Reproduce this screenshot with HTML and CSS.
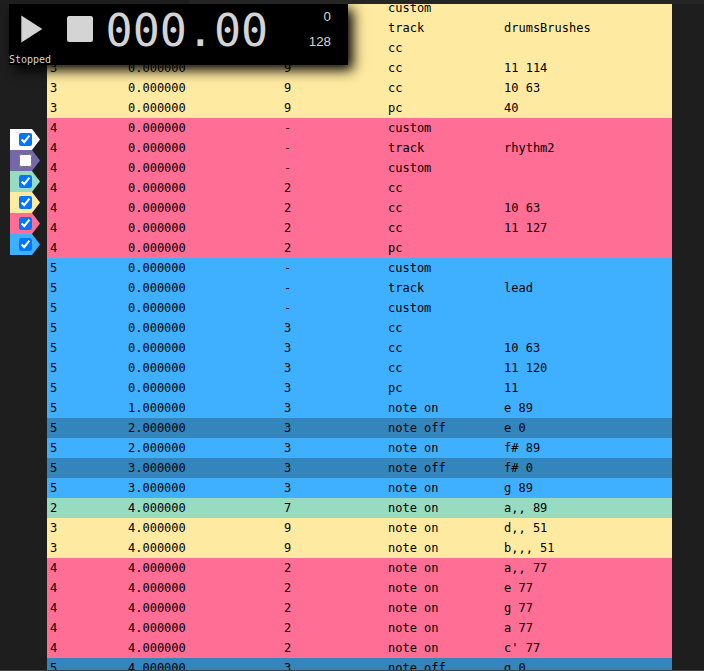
FILE: index.html
```
<!DOCTYPE html>
<html lang="en">
<head>
<meta charset="utf-8">
<title>MIDI Player</title>
<link rel="stylesheet" href="styles.css">
</head>
<body>
<div class="topbar"><div class="tab"></div></div>
<main class="view">
  <aside class="filters">
    <label class="filter white"><input type="checkbox" checked></label>
    <label class="filter purple"><input type="checkbox"></label>
    <label class="filter green"><input type="checkbox" checked></label>
    <label class="filter yellow"><input type="checkbox" checked></label>
    <label class="filter pink"><input type="checkbox" checked></label>
    <label class="filter blue"><input type="checkbox" checked></label>
  </aside>
  <div class="events">
    <div class="row yellow"><span></span><span></span><span></span><span>custom</span><span></span></div>
    <div class="row yellow"><span></span><span></span><span></span><span>track</span><span>drumsBrushes</span></div>
    <div class="row yellow"><span></span><span></span><span></span><span>cc</span><span></span></div>
    <div class="row yellow"><span>3</span><span>0.000000</span><span>9</span><span>cc</span><span>11 114</span></div>
    <div class="row yellow"><span>3</span><span>0.000000</span><span>9</span><span>cc</span><span>10 63</span></div>
    <div class="row yellow"><span>3</span><span>0.000000</span><span>9</span><span>pc</span><span>40</span></div>
    <div class="row pink"><span>4</span><span>0.000000</span><span>-</span><span>custom</span><span></span></div>
    <div class="row pink"><span>4</span><span>0.000000</span><span>-</span><span>track</span><span>rhythm2</span></div>
    <div class="row pink"><span>4</span><span>0.000000</span><span>-</span><span>custom</span><span></span></div>
    <div class="row pink"><span>4</span><span>0.000000</span><span>2</span><span>cc</span><span></span></div>
    <div class="row pink"><span>4</span><span>0.000000</span><span>2</span><span>cc</span><span>10 63</span></div>
    <div class="row pink"><span>4</span><span>0.000000</span><span>2</span><span>cc</span><span>11 127</span></div>
    <div class="row pink"><span>4</span><span>0.000000</span><span>2</span><span>pc</span><span></span></div>
    <div class="row blue"><span>5</span><span>0.000000</span><span>-</span><span>custom</span><span></span></div>
    <div class="row blue"><span>5</span><span>0.000000</span><span>-</span><span>track</span><span>lead</span></div>
    <div class="row blue"><span>5</span><span>0.000000</span><span>-</span><span>custom</span><span></span></div>
    <div class="row blue"><span>5</span><span>0.000000</span><span>3</span><span>cc</span><span></span></div>
    <div class="row blue"><span>5</span><span>0.000000</span><span>3</span><span>cc</span><span>10 63</span></div>
    <div class="row blue"><span>5</span><span>0.000000</span><span>3</span><span>cc</span><span>11 120</span></div>
    <div class="row blue"><span>5</span><span>0.000000</span><span>3</span><span>pc</span><span>11</span></div>
    <div class="row blue"><span>5</span><span>1.000000</span><span>3</span><span>note on</span><span>e 89</span></div>
    <div class="row blue off"><span>5</span><span>2.000000</span><span>3</span><span>note off</span><span>e 0</span></div>
    <div class="row blue"><span>5</span><span>2.000000</span><span>3</span><span>note on</span><span>f# 89</span></div>
    <div class="row blue off"><span>5</span><span>3.000000</span><span>3</span><span>note off</span><span>f# 0</span></div>
    <div class="row blue"><span>5</span><span>3.000000</span><span>3</span><span>note on</span><span>g 89</span></div>
    <div class="row green"><span>2</span><span>4.000000</span><span>7</span><span>note on</span><span>a,, 89</span></div>
    <div class="row yellow"><span>3</span><span>4.000000</span><span>9</span><span>note on</span><span>d,, 51</span></div>
    <div class="row yellow"><span>3</span><span>4.000000</span><span>9</span><span>note on</span><span>b,,, 51</span></div>
    <div class="row pink"><span>4</span><span>4.000000</span><span>2</span><span>note on</span><span>a,, 77</span></div>
    <div class="row pink"><span>4</span><span>4.000000</span><span>2</span><span>note on</span><span>e 77</span></div>
    <div class="row pink"><span>4</span><span>4.000000</span><span>2</span><span>note on</span><span>g 77</span></div>
    <div class="row pink"><span>4</span><span>4.000000</span><span>2</span><span>note on</span><span>a 77</span></div>
    <div class="row pink"><span>4</span><span>4.000000</span><span>2</span><span>note on</span><span>c' 77</span></div>
    <div class="row blue off"><span>5</span><span>4.000000</span><span>3</span><span>note off</span><span>g 0</span></div>
  </div>
  <section class="transport">
    <div class="controls">
      <svg class="play" viewBox="0 0 22 28"><path d="M0.3 0.6 21.3 14 0.3 27.6Z"/></svg>
      <svg class="stop" viewBox="0 0 26 26"><rect width="26" height="26" rx="2.2"/></svg>
      <div class="time">000.00</div>
      <div class="stats"><span>0</span><span>128</span></div>
    </div>
    <div class="status">Stopped</div>
  </section>
</main>
</body>
</html>
```
FILE: styles.css
```
* {
  box-sizing: border-box;
}

body {
  margin: 0;
  height: 671px;
  overflow: hidden;
  display: flex;
  flex-direction: column;
  background: #1e1e1e;
}

.topbar {
  height: 4px;
  flex: none;
  background: #252526;
}

.tab {
  width: 189px;
  height: 4px;
  background: #1e1e1e;
}

.view {
  position: relative;
  flex: 1;
  min-height: 0;
  overflow: hidden;
  display: flex;
  align-items: flex-start;
  border-bottom: 1px solid #414141;
}

.white { background: #ffffff; }
.purple { background: #7468ab; }
.green { background: #97dbc1; }
.yellow { background: #ffeaa1; }
.pink { background: #ff6e95; }
.blue { background: #3eb0ff; }

.filters {
  width: 47px;
  padding: 125px 0 0 10px;
  flex: none;
}

.filter {
  display: flex;
  width: 30px;
  height: 21px;
  padding: 4px 0 0 9px;
  clip-path: polygon(0 0, 22px 0, 100% 50%, 22px 100%, 0 100%);
}

.filter input {
  width: 13px;
  height: 13px;
  margin: 0;
}

.events {
  width: 625px;
  margin-top: -6px;
  flex: none;
  color: #000;
  font: 12px/20px "DejaVu Sans Mono", monospace;
}

.row {
  display: grid;
  grid-template-columns: 78px 156px 104px 116px 1fr;
  height: 20px;
  padding-left: 3px;
  white-space: pre;
}

.row.off {
  background: #3485bc;
}

.transport {
  position: absolute;
  top: 0;
  left: 9px;
  width: 339px;
  height: 61px;
  background: #000;
  color: #d4d4d4;
  box-shadow: 5px 5px 12px #000;
}

.controls {
  display: flex;
  height: 50px;
  padding-left: 12px;
}

.controls svg {
  fill: #d4d4d4;
}

.play {
  width: 22px;
  height: 28px;
  margin-top: 11px;
}

.stop {
  width: 26px;
  height: 26px;
  margin: 12px 0 0 24px;
}

.time {
  width: 163px;
  margin-left: 12.6px;
  margin-right: -0.6px;
  font: 45px/54px "DejaVu Sans Mono", monospace;
}

.stats {
  display: flex;
  flex-direction: column;
  width: 63px;
  text-align: right;
  font: 13.333px/25px "Liberation Sans", sans-serif;
}

.status {
  font: 10px/12px "DejaVu Sans Mono", monospace;
}
```
